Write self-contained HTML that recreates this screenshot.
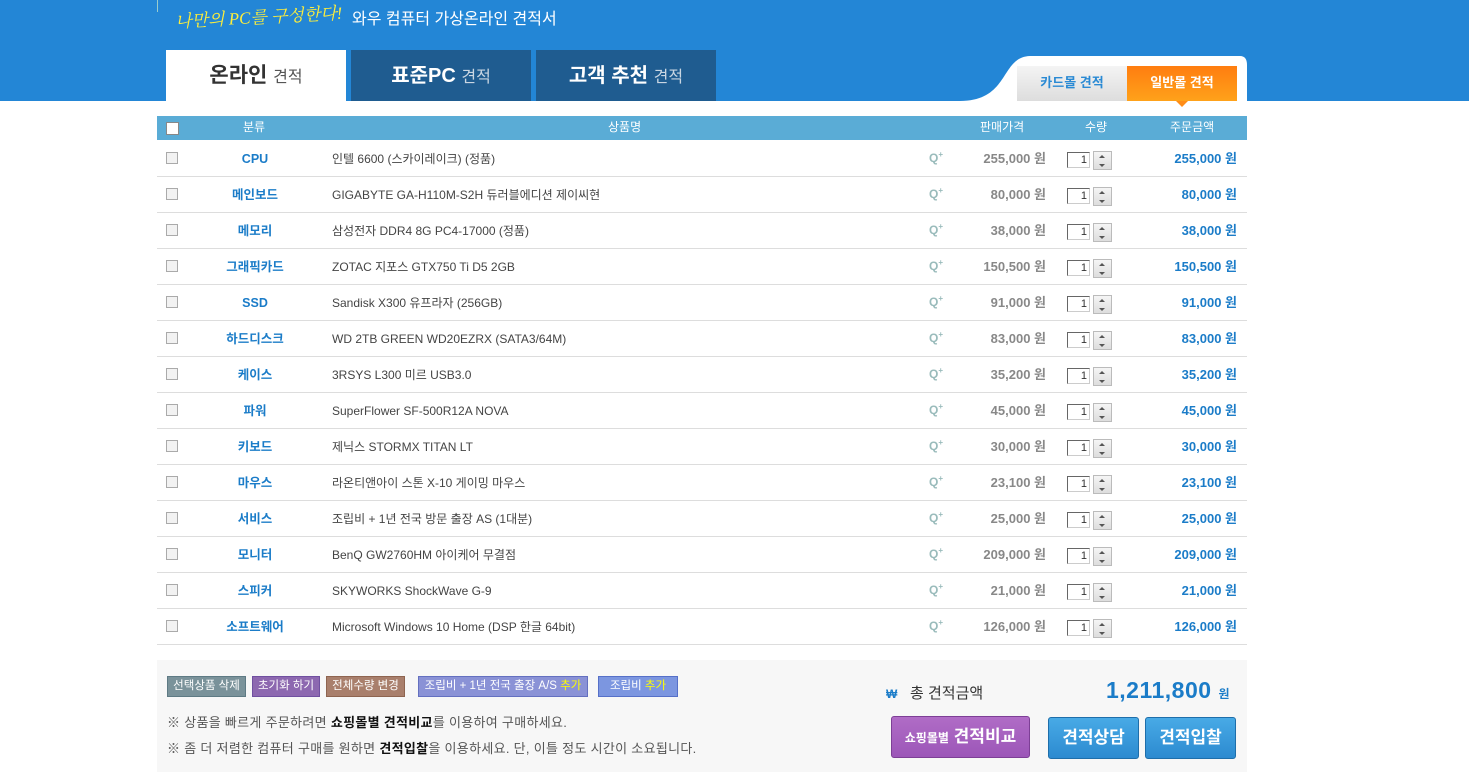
<!DOCTYPE html>
<html><head><meta charset="utf-8"><style>
*{margin:0;padding:0;box-sizing:border-box}
body{width:1469px;height:772px;background:#fff;font-family:"Liberation Sans","Noto Sans CJK KR",sans-serif;position:relative;overflow:hidden;font-size:12px}
.hdr{position:absolute;left:0;top:0;width:1469px;height:101px;background:#2386d6}
.abs{position:absolute}
.tab{position:absolute;top:50px;height:51px;width:180px;background:#1f5c90;color:#fff;font-size:20px;font-weight:bold;text-align:center;line-height:52px}
.tab small{font-size:16px;font-weight:normal;color:#c9d6e2}
.th{position:absolute;top:116px;left:157px;width:1090px;height:24px;background:#5aacd6;color:#fff;font-size:12px}
.th span{position:absolute;top:0;line-height:22px}
.row{position:absolute;left:157px;width:1090px;height:36px;border-bottom:1px solid #ddd;font-size:12px}
.row>*{position:absolute;top:0;line-height:36px;height:36px}
.row>.cb{left:9px;top:11px;width:12px;height:12px;border:1px solid #aaa;background:#f2f2f2;line-height:normal}
.cat{left:48px;width:100px;text-align:center;color:#1b7cc8;font-weight:bold;font-size:12.5px}
.nm{left:175px;color:#444}
.row>.q{left:772px;top:-4px;color:#9bb;font-size:12px;font-weight:bold}
.pr{right:201px;color:#888;font-weight:bold;font-size:13px}
.row>.qb{left:910px;top:11px;width:23px;height:16px;border:1px solid #666;border-right-color:#ccc;border-bottom-color:#ccc;text-align:right;font-size:11px;line-height:14px;padding-right:2px;color:#333}
.row>.sp{left:936px;top:10px;width:19px;height:19px;border:1px solid #bbb;background:linear-gradient(#f5f5f5,#ddd)}
.sp:before{content:"";position:absolute;left:5px;top:3px;border:3px solid transparent;border-bottom-color:#555;border-top:0}
.sp:after{content:"";position:absolute;left:5px;top:12px;border:3px solid transparent;border-top-color:#555;border-bottom:0}
.tot{right:10px;color:#1b7cc8;font-weight:bold;font-size:13px}
.btn{position:absolute;top:676px;height:21px;color:#fff;font-size:11.5px;text-align:center;line-height:19px;border:1px solid}
.big{position:absolute;top:717px;height:42px;color:#fff;font-weight:bold;font-size:17px;text-align:center;line-height:40px;border-radius:3px}
</style></head><body>
<div class="hdr"></div>
<div class="abs" style="left:157px;top:0;width:1px;height:12px;background:#9cc"></div>
<div class="abs" style="left:175px;top:3px;color:#ffef3a;font-style:italic;font-size:17px;font-family:'Liberation Serif','Noto Serif CJK SC',serif;transform:rotate(-3deg)">나만의 PC를 구성한다!</div>
<div class="abs" style="left:352px;top:5px;color:#fff;font-size:16px">와우 컴퓨터 가상온라인 견적서</div>
<div class="tab" style="left:166px;background:#fff;color:#333;font-size:21px">온라인 <small style="color:#555">견적</small></div>
<div class="tab" style="left:351px">표준PC <small>견적</small></div>
<div class="tab" style="left:536px">고객 추천 <small>견적</small></div>
<svg class="abs" style="left:940px;top:55px" width="320" height="47"><path d="M20 46 C70 46 60 2 90 1 L300 1 Q307 1 307 10 L307 46 Z" fill="#fff"/></svg>
<div class="abs" style="left:1017px;top:66px;width:110px;height:35px;background:linear-gradient(#f4f4f4,#ddd);color:#2a8ad4;font-weight:bold;font-size:13px;text-align:center;line-height:34px">카드몰 견적</div>
<div class="abs" style="left:1127px;top:66px;width:110px;height:35px;background:linear-gradient(#ff7d10,#ffa21a);color:#fff;font-weight:bold;font-size:13px;text-align:center;line-height:34px">일반몰 견적</div>
<div class="abs" style="left:1176px;top:101px;border:6px solid transparent;border-top-color:#ff8d18"></div>
<div class="th"><span style="left:9px;top:6px;width:13px;height:13px;border:1px solid #888;background:#fff"></span><span style="left:86px">분류</span><span style="left:451px">상품명</span><span style="left:823px">판매가격</span><span style="left:928px">수량</span><span style="left:1013px">주문금액</span></div>
<div id="rows"></div>
<div class="abs" style="left:157px;top:660px;width:1090px;height:112px;background:#f7f7f7"></div>
<div class="btn" style="left:167px;width:79px;background:#7a929a;border-color:#5e7a84">선택상품 삭제</div>
<div class="btn" style="left:252px;width:68px;background:#8d68b0;border-color:#7050a0">초기화 하기</div>
<div class="btn" style="left:326px;width:79px;background:#a97f6c;border-color:#8e6450">전체수량 변경</div>
<div class="btn" style="left:418px;width:170px;background:#8a92d6;border-color:#6470c0">조립비 + 1년 전국 출장 A/S <span style="color:#ff0">추가</span></div>
<div class="btn" style="left:598px;width:80px;background:#7c96e0;border-color:#5670c8">조립비 <span style="color:#ff0">추가</span></div>
<div class="abs" style="left:167px;top:712px;color:#555;font-size:13px;letter-spacing:0.3px">※ 상품을 빠르게 주문하려면 <b style="color:#111">쇼핑몰별 견적비교</b>를 이용하여 구매하세요.</div>
<div class="abs" style="left:167px;top:738px;color:#555;font-size:13px;letter-spacing:0.3px">※ 좀 더 저렴한 컴퓨터 구매를 원하면 <b style="color:#111">견적입찰</b>을 이용하세요. 단, 이틀 정도 시간이 소요됩니다.</div>
<div class="abs" style="left:886px;top:687px;color:#1b7cc8;font-weight:bold;font-size:12px">₩</div>
<div class="abs" style="left:910px;top:682px;color:#333;font-size:15px">총 견적금액</div>
<div class="abs" style="left:1106px;top:677px;color:#1b7cc8;font-weight:bold;font-size:23px;letter-spacing:0.5px">1,211,800 <span style="font-size:12px">원</span></div>
<div class="big" style="left:891px;width:139px;background:linear-gradient(#b06cc6,#9c56b8);border:1px solid #7d3f96;top:716px"><span style="font-size:12px">쇼핑몰별</span> 견적비교</div>
<div class="big" style="left:1048px;width:91px;background:linear-gradient(#48aae6,#2c8ad0);border:1px solid #1e6eaa">견적상담</div>
<div class="big" style="left:1145px;width:91px;background:linear-gradient(#48aae6,#2c8ad0);border:1px solid #1e6eaa">견적입찰</div>
<script>
var d=[["CPU","인텔 6600 (스카이레이크) (정품)","255,000"],["메인보드","GIGABYTE GA-H110M-S2H 듀러블에디션 제이씨현","80,000"],["메모리","삼성전자 DDR4 8G PC4-17000 (정품)","38,000"],["그래픽카드","ZOTAC 지포스 GTX750 Ti D5 2GB","150,500"],["SSD","Sandisk X300 유프라자 (256GB)","91,000"],["하드디스크","WD 2TB GREEN WD20EZRX (SATA3/64M)","83,000"],["케이스","3RSYS L300 미르 USB3.0","35,200"],["파워","SuperFlower SF-500R12A NOVA","45,000"],["키보드","제닉스 STORMX TITAN LT","30,000"],["마우스","라온티앤아이 스톤 X-10 게이밍 마우스","23,100"],["서비스","조립비 + 1년 전국 방문 출장 AS (1대분)","25,000"],["모니터","BenQ GW2760HM 아이케어 무결점","209,000"],["스피커","SKYWORKS ShockWave G-9","21,000"],["소프트웨어","Microsoft Windows 10 Home (DSP 한글 64bit)","126,000"]];
var h="";d.forEach(function(r,i){h+='<div class="row" style="top:'+(141+i*36)+'px"><span class="cb"></span><span class="cat">'+r[0]+'</span><span class="nm">'+r[1]+'</span><span class="q">Q<sup style="font-size:8px">+</sup></span><span class="pr">'+r[2]+' 원</span><span class="qb">1</span><span class="sp"></span><span class="tot">'+r[2]+' 원</span></div>'});
document.getElementById("rows").innerHTML=h;
</script>
</body></html>
